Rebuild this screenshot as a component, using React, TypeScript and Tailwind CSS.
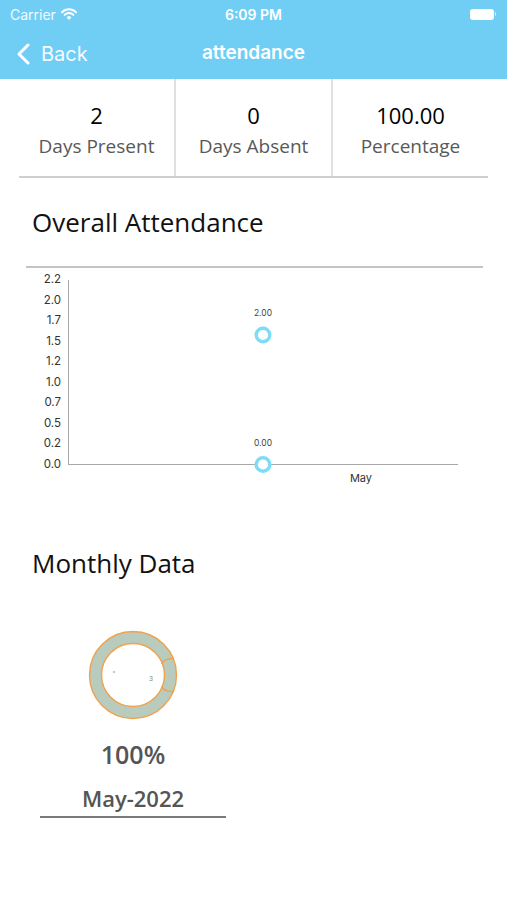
import React from "react";

const ticks = ["2.2", "2.0", "1.7", "1.5", "1.2", "1.0", "0.7", "0.5", "0.2", "0.0"];

function Chart() {
  // svg origin at page (26, 268)
  const ox = 26;
  const oy = 268;
  const yTop = 279;
  const yBot = 464;
  const step = (yBot - yTop) / 9;
  return (
    <svg width="457" height="230" viewBox={`${ox} ${oy} 457 230`} className="block ml-[26px]">
      {ticks.map((t, i) => (
        <text
          key={t}
          x={61}
          y={yTop + i * step + 4}
          textAnchor="end"
          fontSize="11.5"
          fill="#333"
          fontFamily="Inter, 'Liberation Sans', sans-serif"
        >
          {t}
        </text>
      ))}
      <line x1={68.5} y1={280} x2={68.5} y2={464.5} stroke="#a8a8a8" strokeWidth="1" />
      <line x1={68} y1={464.5} x2={458} y2={464.5} stroke="#a8a8a8" strokeWidth="1" />
      <text x={263} y={316} textAnchor="middle" fontSize="8.5" fill="#444" fontFamily="Inter, 'Liberation Sans', sans-serif">2.00</text>
      <circle cx={263} cy={335} r={6.8} fill="white" stroke="#7fdcf8" strokeWidth="3.4" />
      <text x={263} y={446} textAnchor="middle" fontSize="8.5" fill="#444" fontFamily="Inter, 'Liberation Sans', sans-serif">0.00</text>
      <circle cx={263} cy={464.5} r={6.8} fill="white" stroke="#7fdcf8" strokeWidth="3.4" />
      <text x={361} y={482} textAnchor="middle" fontSize="11" fill="#333" fontFamily="Inter, 'Liberation Sans', sans-serif">May</text>
    </svg>
  );
}

function Donut() {
  const cx = 47;
  const cy = 47;
  return (
    <svg width="94" height="94" viewBox="0 0 94 94" className="block">
      <circle cx={cx} cy={cy} r={37.5} fill="none" stroke="#b9cbbc" strokeWidth="12" />
      <circle cx={cx} cy={cy} r={43.5} fill="none" stroke="#f0a24c" strokeWidth="1.4" />
      <circle cx={cx} cy={cy} r={31.5} fill="none" stroke="#f0a24c" strokeWidth="1.4" />
      <path d="M 75.5 36 Q 78 30.5 88 30.5" fill="none" stroke="#f0a24c" strokeWidth="1.4" />
      <path d="M 75.5 58 Q 78 64 88 63.5" fill="none" stroke="#f0a24c" strokeWidth="1.4" />
      <circle cx={28} cy={44} r={0.7} fill="#666" />
      <text x={63} y={53} fontSize="7" fill="#888" fontFamily="'Liberation Sans', sans-serif">3</text>
    </svg>
  );
}

export default function App() {
  const body = { fontFamily: "'Open Sans', 'Noto Sans', sans-serif" };
  return (
    <div className="w-[507px] h-[900px] bg-white overflow-hidden" style={body}>
      {/* Header */}
      <div className="bg-[#70cef5] h-[79px] text-white">
        <div className="h-[28px] flex items-center justify-between px-[10px] relative" style={{ fontFamily: "Inter, 'Liberation Sans', sans-serif" }}>
          <div className="flex items-center gap-[5px] text-[14px] text-white/90">
            <span>Carrier</span>
            <svg width="16" height="12" viewBox="0 0 16 12">
              <path d="M1 4.2 A10 10 0 0 1 15 4.2" fill="none" stroke="white" strokeWidth="2" strokeLinecap="round" />
              <path d="M3.6 6.9 A6.3 6.3 0 0 1 12.4 6.9" fill="none" stroke="white" strokeWidth="2" strokeLinecap="round" />
              <path d="M6.1 9.4 A2.7 2.7 0 0 1 9.9 9.4 L8 11.4 Z" fill="white" stroke="white" strokeWidth="1" strokeLinejoin="round" />
            </svg>
          </div>
          <div className="absolute left-0 right-0 text-center text-[14px] font-semibold pointer-events-none">6:09 PM</div>
          <div className="flex items-center pr-[1px]">
            <div className="w-[24px] h-[11px] rounded-[3px] bg-white" />
            <div className="w-[1.5px] h-[4px] bg-white/60 ml-[1px] rounded-r" />
          </div>
        </div>
        <div className="h-[51px] flex items-center relative" style={{ fontFamily: "Inter, 'Liberation Sans', sans-serif" }}>
          <div className="flex items-center pl-[16px] gap-[11px]">
            <svg width="14" height="22" viewBox="0 0 14 22">
              <path d="M12 2 L3 11 L12 20" fill="none" stroke="white" strokeWidth="3" strokeLinecap="round" strokeLinejoin="round" />
            </svg>
            <span className="text-[20px] text-white/95">Back</span>
          </div>
          <div className="absolute left-0 right-0 text-center text-[19px] font-semibold pointer-events-none">attendance</div>
        </div>
      </div>

      {/* Stats */}
      <div className="mx-[19px] flex h-[99px] pt-[4px] border-b-2 border-[#cfcfcf]">
        <div className="flex-1 flex flex-col items-center justify-center border-r-2 border-[#e0e0e0] -mt-[4px] pt-[4px]">
          <div className="text-[22px] leading-[30px] text-black font-medium">2</div>
          <div className="text-[19px] leading-[28px] mt-[2px] text-[#595959]">Days Present</div>
        </div>
        <div className="flex-1 flex flex-col items-center justify-center border-r-2 border-[#e0e0e0] -mt-[4px] pt-[4px]">
          <div className="text-[22px] leading-[30px] text-black font-medium">0</div>
          <div className="text-[19px] leading-[28px] mt-[2px] text-[#595959]">Days Absent</div>
        </div>
        <div className="flex-1 flex flex-col items-center justify-center -mt-[4px] pt-[4px]">
          <div className="text-[22px] leading-[30px] text-black font-medium">100.00</div>
          <div className="text-[19px] leading-[28px] mt-[2px] text-[#595959]">Percentage</div>
        </div>
      </div>

      {/* Overall attendance */}
      <div className="pl-[32px] pt-[27px] text-[26px] leading-[34px] text-[#111]">Overall Attendance</div>
      <div className="mx-[26px] mt-[27px] border-t-2 border-[#c4c4c4] w-[457px]" />
      <Chart />

      {/* Monthly data */}
      <div className="pl-[32px] pt-[48px] text-[26px] leading-[34px] text-[#111]">Monthly Data</div>
      <div className="w-[186px] ml-[40px] mt-[48px] flex flex-col items-center">
        <Donut />
        <div className="mt-[17px] text-[25px] leading-[30px] font-semibold text-[#555]">100%</div>
        <div className="mt-[14px] text-[22px] leading-[30px] font-semibold text-[#555]">May-2022</div>
        <div className="w-full mt-[3px] border-t-2 border-[#7a7a7a]" />
      </div>
    </div>
  );
}
